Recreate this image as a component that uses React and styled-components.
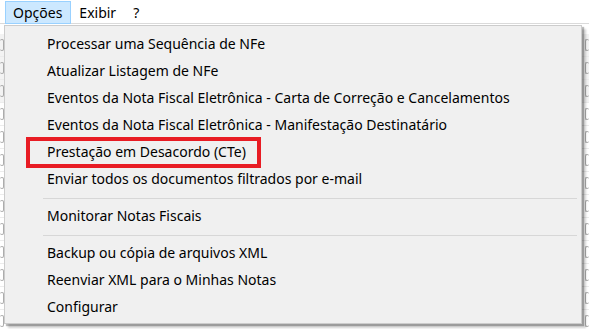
import React from 'react'
import styled, { createGlobalStyle } from 'styled-components'

const GlobalStyle = createGlobalStyle`
  html, body {
    margin: 0;
    padding: 0;
    background: #ffffff;
  }
  body {
    font-family: "Noto Sans", "Open Sans", sans-serif;
    -webkit-font-smoothing: antialiased;
  }
`

const menuBar = [
  { label: 'Opções', active: true },
  { label: 'Exibir' },
  { label: '?' },
]

const entries = [
  { label: 'Processar uma Sequência de NFe' },
  { label: 'Atualizar Listagem de NFe' },
  { label: 'Eventos da Nota Fiscal Eletrônica - Carta de Correção e Cancelamentos' },
  { label: 'Eventos da Nota Fiscal Eletrônica - Manifestação Destinatário' },
  { label: 'Prestação em Desacordo (CTe)', marked: true },
  { label: 'Enviar todos os documentos filtrados por e-mail' },
  { sep: true },
  { label: 'Monitorar Notas Fiscais' },
  { sep: true },
  { label: 'Backup ou cópia de arquivos XML' },
  { label: 'Reenviar XML para o Minhas Notas' },
  { label: 'Configurar' },
]

const App = () => {
  return (
    <>
      <GlobalStyle />
      <Screen>
        <MenuBar>
          {menuBar.map((m) => (
            <BarItem key={m.label} $active={m.active}>
              {m.label}
            </BarItem>
          ))}
        </MenuBar>

        {/* window content behind the open menu, only its edges show */}
        <Backdrop>
          {Array.from({ length: 14 }).map((_, i) => (
            <BackRow key={i} $dark={i < 3}>
              <Tick />
              <Tick $right />
            </BackRow>
          ))}
        </Backdrop>

        <Dropdown>
          {entries.map((e, i) =>
            e.sep ? (
              <Separator key={i} />
            ) : (
              <Item key={i}>
                {e.label}
                {e.marked && <Callout />}
              </Item>
            )
          )}
        </Dropdown>
      </Screen>
    </>
  )
}

export default App

const Screen = styled.div`
  position: relative;
  width: 589px;
  height: 329px;
  overflow: hidden;
  background: #ffffff;
`

const MenuBar = styled.div`
  display: flex;
  align-items: stretch;
  height: 24px;
  padding: 1px 0 0 5px;
  box-sizing: border-box;
  border-bottom: 1px solid #dadada;
  background: #ffffff;
`

const BarItem = styled.div`
  display: flex;
  align-items: center;
  padding: 0 8px 0 7px;
  font-size: 14px;
  color: #000000;
  border: 1px solid ${(p) => (p.$active ? '#99d1ff' : 'transparent')};
  background: ${(p) => (p.$active ? '#cce8ff' : 'transparent')};
  box-sizing: border-box;
  height: 23px;
`

const Backdrop = styled.div`
  display: flex;
  flex-direction: column;
  padding-top: 10px;
`

const BackRow = styled.div`
  display: flex;
  justify-content: space-between;
  align-items: center;
  height: 22px;
  border-bottom: 1px solid #ececec;
  background: ${(p) => (p.$dark ? '#f3f3f3' : '#ffffff')};
`

const Tick = styled.span`
  width: 3px;
  height: 10px;
  border: 1px solid #8a8a8a;
  border-${(p) => (p.$right ? 'right' : 'left')}: none;
  border-radius: 2px;
  opacity: 0.7;
`

const Dropdown = styled.div`
  position: absolute;
  left: 4px;
  top: 25px;
  width: 578px;
  height: 299px;
  box-sizing: border-box;
  padding: 4px 2px 0 2px;
  background: #f0f0f0;
  border: 1px solid #cccccc;
  box-shadow: 2px 2px 1px rgba(0, 0, 0, 0.25), 4px 4px 2px rgba(0, 0, 0, 0.18);
  display: flex;
  flex-direction: column;
`

const Item = styled.div`
  position: relative;
  height: 27px;
  line-height: 27px;
  padding-left: 40px;
  font-size: 14px;
  color: #000000;
  white-space: nowrap;
`

const Separator = styled.div`
  height: 10px;
  margin-left: 36px;
  margin-right: 2px;
  &::after {
    content: '';
    display: block;
    margin-top: 6px;
    height: 1px;
    background: #d7d7d7;
  }
`

const Callout = styled.div`
  position: absolute;
  left: 19px;
  top: -1px;
  width: 235px;
  height: 31px;
  box-sizing: border-box;
  border: 4px solid #e81c24;
`
